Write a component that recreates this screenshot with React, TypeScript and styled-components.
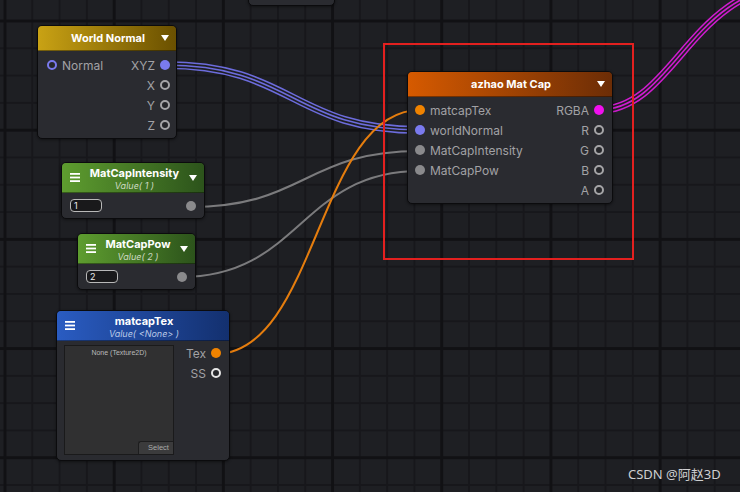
import React from "react";
import styled, { createGlobalStyle, css } from "styled-components";

const GlobalStyle = createGlobalStyle`
  html, body {
    margin: 0;
    padding: 0;
    background: #1e1f23;
    overflow: hidden;
  }
`;

const BG = "#1e1f23";

const Canvas = styled.div`
  position: relative;
  width: 740px;
  height: 492px;
  overflow: hidden;
  font-family: Inter, "Noto Sans", sans-serif;
  background-color: ${BG};
  background-image:
    linear-gradient(90deg, #111114 3px, transparent 3px),
    linear-gradient(180deg, #111114 3px, transparent 3px),
    linear-gradient(90deg, #17171b 2px, transparent 2px),
    linear-gradient(180deg, #17171b 2px, transparent 2px);
  background-size: 109.2px 109.2px, 109.2px 109.2px, 27.3px 27.3px, 27.3px 27.3px;
  background-position: 3.5px 0, 0 19.5px, 4px 0, 0 20px;
`;

const Wires = styled.svg`
  position: absolute;
  inset: 0;
  pointer-events: none;
`;

const Node = styled.div<{ $x: number; $y: number; $w: number }>`
  position: absolute;
  left: ${({ $x }) => $x}px;
  top: ${({ $y }) => $y}px;
  width: ${({ $w }) => $w}px;
  box-sizing: border-box;
  background: #2a2b30;
  border: 1px solid #0b0b0d;
  border-radius: 5px;
  box-shadow: 0 1px 3px rgba(0, 0, 0, 0.45);
  overflow: hidden;
`;

const Header = styled.div<{ $from: string; $to: string; $tall?: boolean }>`
  display: flex;
  align-items: center;
  gap: 4px;
  box-sizing: border-box;
  height: ${({ $tall }) => ($tall ? 30 : 25)}px;
  padding: 0 7px 0 8px;
  background: linear-gradient(90deg, ${({ $from }) => $from}, ${({ $to }) => $to});
  border-bottom: 1px solid rgba(0, 0, 0, 0.4);
  color: #fff;
`;

const TitleBlock = styled.div<{ $drop?: number }>`
  flex: 1;
  display: flex;
  flex-direction: column;
  align-items: center;
  min-width: 0;
  padding-top: ${({ $drop }) => $drop ?? 0}px;
`;

const Title = styled.div`
  font-size: 11px;
  font-weight: 700;
  line-height: 13px;
  white-space: nowrap;
`;

const Subtitle = styled.div<{ $tint: string }>`
  font-size: 9px;
  font-style: italic;
  line-height: 11px;
  color: ${({ $tint }) => $tint};
  white-space: nowrap;
`;

const Caret = styled.span`
  width: 0;
  height: 0;
  border-left: 4.5px solid transparent;
  border-right: 4.5px solid transparent;
  border-top: 6px solid #fff;
`;

const Spacer = styled.span`
  width: 9px;
`;

const Body = styled.div<{ $pad: string }>`
  display: flex;
  justify-content: space-between;
  align-items: flex-start;
  padding: ${({ $pad }) => $pad};
`;

const Column = styled.div<{ $end?: boolean; $shift?: number }>`
  display: flex;
  flex-direction: column;
  align-items: ${({ $end }) => ($end ? "flex-end" : "flex-start")};
  margin-top: ${({ $shift }) => $shift ?? 0}px;
`;

const Row = styled.div`
  display: flex;
  align-items: center;
  gap: 5px;
  height: 20px;
  font-size: 12px;
  color: #a2a2a5;
  white-space: nowrap;
`;

const Port = styled.span<{ $color: string; $hollow?: boolean }>`
  flex: none;
  width: 10px;
  height: 10px;
  box-sizing: border-box;
  border-radius: 50%;
  ${({ $color, $hollow }) =>
    $hollow
      ? css`
          border: 2px solid ${$color};
          background: #26272b;
        `
      : css`
          background: ${$color};
        `}
`;

const PropBody = styled.div`
  display: flex;
  align-items: center;
  justify-content: space-between;
  height: 25px;
  padding: 0 8px;
`;

const ValueField = styled.div`
  width: 32px;
  height: 13px;
  box-sizing: border-box;
  border: 1px solid #b9b9b9;
  border-radius: 4px;
  background: #19191b;
  color: #ececec;
  font-size: 9px;
  line-height: 11px;
  padding-left: 3px;
`;

const TextureSlot = styled.div`
  display: flex;
  flex-direction: column;
  align-items: center;
  width: 110px;
  height: 110px;
  box-sizing: border-box;
  background: #303031;
  border: 1px solid #1a1a1b;
`;

const SlotCaption = styled.div`
  margin-top: 3px;
  font-family: "Liberation Sans", Arial, sans-serif;
  font-size: 7px;
  color: #b9b9b9;
`;

const SelectButton = styled.div`
  margin-top: auto;
  align-self: flex-end;
  width: 35px;
  height: 13px;
  box-sizing: border-box;
  background: #3b3b3c;
  border-top: 1px solid #1d1d1e;
  border-left: 1px solid #1d1d1e;
  border-top-left-radius: 3px;
  color: #a9a9a9;
  font-family: "Liberation Sans", Arial, sans-serif;
  font-size: 7.5px;
  line-height: 12px;
  text-align: center;
  padding-left: 5px;
  white-space: nowrap;
`;

const Highlight = styled.div`
  position: absolute;
  left: 383px;
  top: 43px;
  width: 251px;
  height: 217px;
  box-sizing: border-box;
  border: 2px solid #e3201f;
`;

const Watermark = styled.div`
  position: absolute;
  left: 628px;
  bottom: 9px;
  font-family: "Noto Sans", "Noto Sans CJK SC", sans-serif;
  font-size: 13px;
  color: #cfcfd1;
`;

function Hamburger() {
  return (
    <svg width="10" height="9" viewBox="0 0 10 9">
      <rect x="0" y="0" width="10" height="1.8" fill="#fff" />
      <rect x="0" y="3.6" width="10" height="1.8" fill="#fff" />
      <rect x="0" y="7.2" width="10" height="1.8" fill="#fff" />
    </svg>
  );
}

const curve = (x1: number, y1: number, x2: number, y2: number) => {
  const d = Math.max(Math.abs(x2 - x1) * 0.5, 30);
  return `M${x1},${y1} C${x1 + d},${y1} ${x2 - d},${y2} ${x2},${y2}`;
};

function TripleWire({ d, color }: { d: string; color: string }) {
  return (
    <g fill="none">
      <path d={d} stroke={color} strokeWidth={8} />
      <path d={d} stroke={BG} strokeWidth={5} />
      <path d={d} stroke={color} strokeWidth={1.6} />
    </g>
  );
}

const PURPLE = "#7a7aee";
const ORANGE = "#f08300";
const GREY = "#8a8a8c";
const MAGENTA = "#f010ee";
const RING = "#a5a5a7";

export default function App() {
  return (
    <>
      <GlobalStyle />
      <Canvas>
        <Wires width={740} height={492} viewBox="0 0 740 492">
          <TripleWire d={curve(165, 65, 420, 130)} color="#6c6cdc" />
          <TripleWire d="M598,110 C675,110 690,-15 800,-15" color="#cf1ccf" />
          <path d={curve(190, 207, 420, 151)} stroke="#7b7b7d" strokeWidth={2} fill="none" />
          <path d={curve(181, 277, 420, 171)} stroke="#7b7b7d" strokeWidth={2} fill="none" />
          <path d={curve(215, 354, 420, 110)} stroke="#e57d0e" strokeWidth={2} fill="none" />
        </Wires>

        <Node $x={248} $y={-40} $w={87} style={{ height: 46 }} />

        <Node $x={37} $y={25} $w={140}>
          <Header $from="#c9a214" $to="#6a5000">
            <Spacer />
            <TitleBlock>
              <Title>World Normal</Title>
            </TitleBlock>
            <Caret />
          </Header>
          <Body $pad="4px 6px 3px 9px">
            <Column>
              <Row>
                <Port $color={PURPLE} $hollow />
                Normal
              </Row>
            </Column>
            <Column $end>
              <Row>
                XYZ
                <Port $color={PURPLE} />
              </Row>
              <Row>
                X
                <Port $color={RING} $hollow />
              </Row>
              <Row>
                Y
                <Port $color={RING} $hollow />
              </Row>
              <Row>
                Z
                <Port $color={RING} $hollow />
              </Row>
            </Column>
          </Body>
        </Node>

        <Node $x={61} $y={162} $w={144}>
          <Header $from="#5e9d2f" $to="#2c531b" $tall>
            <Hamburger />
            <TitleBlock $drop={2}>
              <Title>MatCapIntensity</Title>
              <Subtitle $tint="#cdd9c2">Value( 1 )</Subtitle>
            </TitleBlock>
            <Caret />
          </Header>
          <PropBody>
            <ValueField>1</ValueField>
            <Port $color={GREY} />
          </PropBody>
        </Node>

        <Node $x={77} $y={233} $w={119}>
          <Header $from="#5e9d2f" $to="#2c531b" $tall>
            <Hamburger />
            <TitleBlock $drop={2}>
              <Title>MatCapPow</Title>
              <Subtitle $tint="#cdd9c2">Value( 2 )</Subtitle>
            </TitleBlock>
            <Caret />
          </Header>
          <PropBody>
            <ValueField>2</ValueField>
            <Port $color={GREY} />
          </PropBody>
        </Node>

        <Node $x={56} $y={310} $w={174}>
          <Header $from="#2a5cc2" $to="#13306f" $tall>
            <Hamburger />
            <TitleBlock $drop={2}>
              <Title>matcapTex</Title>
              <Subtitle $tint="#b9c8e6">Value( &lt;None&gt; )</Subtitle>
            </TitleBlock>
            <Spacer />
          </Header>
          <Body $pad="4px 8px 5px 7px">
            <TextureSlot>
              <SlotCaption>None (Texture2D)</SlotCaption>
              <SelectButton>Select</SelectButton>
            </TextureSlot>
            <Column $end $shift={-2}>
              <Row>
                Tex
                <Port $color={ORANGE} />
              </Row>
              <Row>
                SS
                <Port $color="#e6e6e6" $hollow />
              </Row>
            </Column>
          </Body>
        </Node>

        <Node $x={407} $y={71} $w={206}>
          <Header $from="#d65a00" $to="#6c2d06">
            <Spacer />
            <TitleBlock>
              <Title>azhao Mat Cap</Title>
            </TitleBlock>
            <Caret />
          </Header>
          <Body $pad="3px 8px 3px 7px">
            <Column>
              <Row>
                <Port $color={ORANGE} />
                matcapTex
              </Row>
              <Row>
                <Port $color={PURPLE} />
                worldNormal
              </Row>
              <Row>
                <Port $color={GREY} />
                MatCapIntensity
              </Row>
              <Row>
                <Port $color={GREY} />
                MatCapPow
              </Row>
            </Column>
            <Column $end>
              <Row>
                RGBA
                <Port $color={MAGENTA} />
              </Row>
              <Row>
                R
                <Port $color={RING} $hollow />
              </Row>
              <Row>
                G
                <Port $color={RING} $hollow />
              </Row>
              <Row>
                B
                <Port $color={RING} $hollow />
              </Row>
              <Row>
                A
                <Port $color={RING} $hollow />
              </Row>
            </Column>
          </Body>
        </Node>

        <Highlight />
        <Watermark>CSDN @阿赵3D</Watermark>
      </Canvas>
    </>
  );
}
